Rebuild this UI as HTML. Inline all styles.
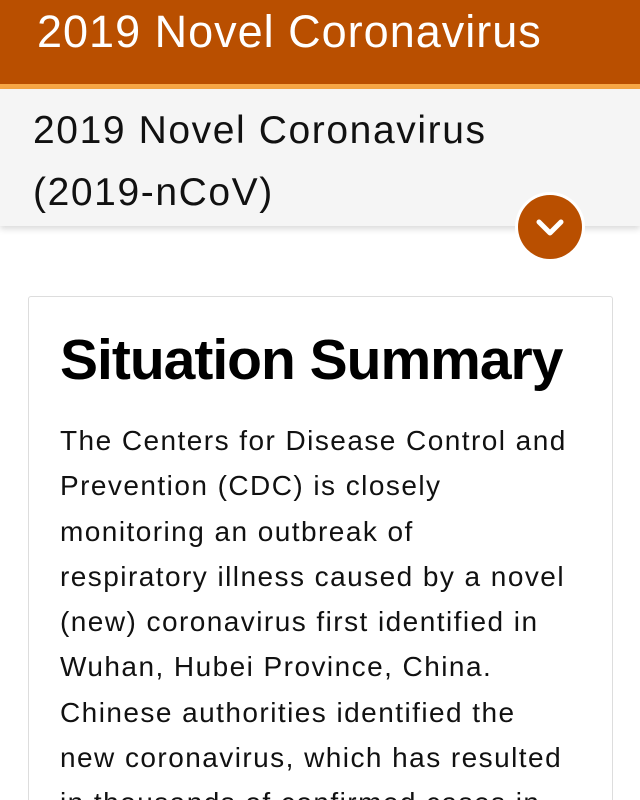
<!DOCTYPE html>
<html><head><meta charset="utf-8"><style>
html{overflow:hidden}
body{margin:0;width:640px;height:800px;overflow:hidden;background:#fff;font-family:"Liberation Sans",sans-serif;position:relative}
.hd{position:absolute;left:0;top:0;width:640px;height:84px;background:#b94f00}
.hd span{position:absolute;left:37px;top:6px;font-size:45px;color:#fff;white-space:nowrap;letter-spacing:1px}
.st{position:absolute;left:0;top:84px;width:640px;height:5px;background:#f7a745}
.sub{position:absolute;left:0;top:89px;width:640px;height:137px;background:#f5f5f5;box-shadow:0 3px 6px rgba(0,0,0,.15)}
.sub div{position:absolute;left:33px;top:11px;font-size:39px;line-height:62px;color:#111;letter-spacing:1.6px;white-space:nowrap}
.btn{position:absolute;left:518px;top:195px;width:64px;height:64px;border-radius:50%;background:#b94f00;box-shadow:0 0 0 3px #fff}
.card{position:absolute;left:28px;top:296px;width:583px;height:503px;border:1px solid #ddd;border-bottom:none;border-radius:3px 3px 0 0;background:#fff;overflow:hidden}
h1{position:absolute;left:31px;top:30px;margin:0;font-size:57px;font-weight:bold;color:#000;letter-spacing:-1px;white-space:nowrap}
p{position:absolute;left:31px;top:121px;margin:0;font-size:28px;line-height:45.3px;color:#111;width:540px;letter-spacing:1.45px;white-space:nowrap}
</style></head><body>
<div class="hd"><span>2019 Novel Coronavirus</span></div>
<div class="st"></div>
<div class="sub"><div>2019 Novel Coronavirus<br>(2019-nCoV)</div></div>
<div class="btn"><svg width="64" height="64" viewBox="0 0 64 64"><path d="M21 27 L32 38 L43 27" fill="none" stroke="#fff" stroke-width="5" stroke-linecap="round" stroke-linejoin="round"/></svg></div>
<div class="card">
<h1>Situation Summary</h1>
<p>The Centers for Disease Control and<br>Prevention (CDC) is closely<br>monitoring an outbreak of<br>respiratory illness caused by a novel<br>(new) coronavirus first identified in<br>Wuhan, Hubei Province, China.<br>Chinese authorities identified the<br>new coronavirus, which has resulted<br>in thousands of confirmed cases in</p>
</div>
</body></html>
